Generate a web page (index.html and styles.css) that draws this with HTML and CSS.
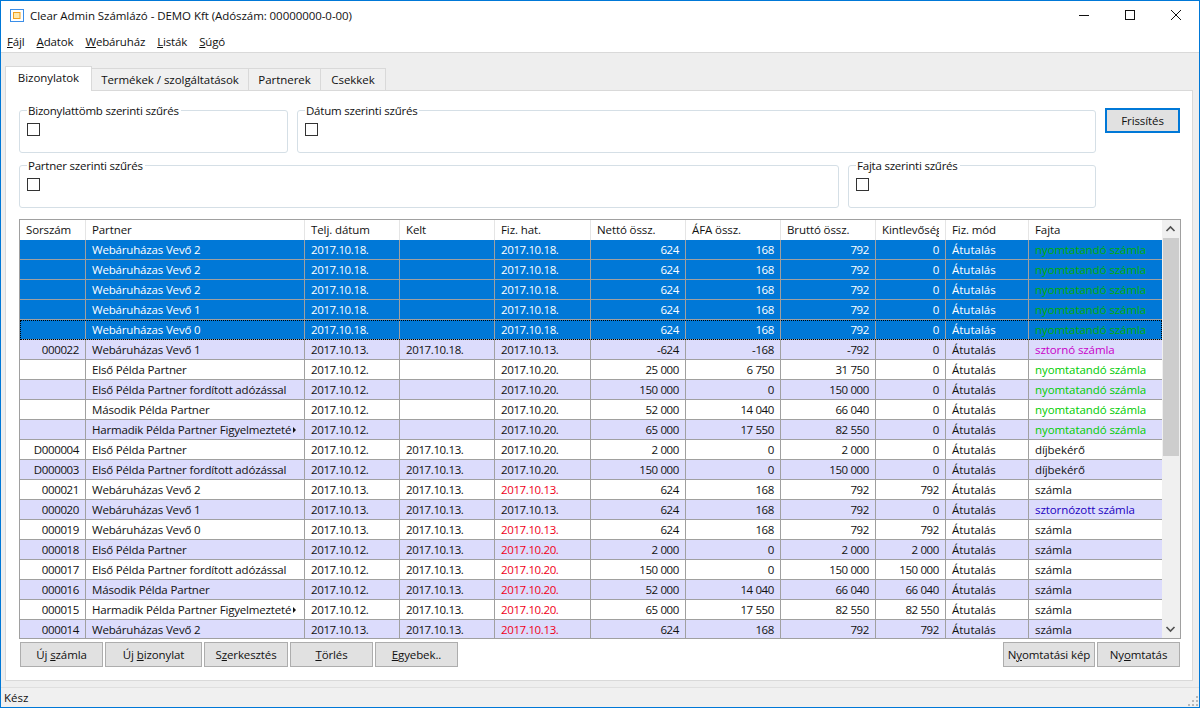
FILE: index.html
```html
<!DOCTYPE html>
<html lang="hu">
<head>
<meta charset="utf-8">
<title>Clear Admin Számlázó</title>
<link rel="stylesheet" href="styles.css">
</head>
<body>
<div class="window">
  <header class="titlebar">
    <svg class="appicon" width="14" height="14" viewBox="0 0 14 14"><rect x="0.5" y="0.5" width="13" height="12" fill="#fff" stroke="#3b8ee8"/><rect x="3.5" y="3.5" width="6.5" height="6" fill="#ffe9b0" stroke="#f0a020"/></svg>
    <span class="title">Clear Admin Számlázó - DEMO Kft (Adószám: 00000000-0-00)</span>
    <div class="winbtns">
      <svg width="46" height="28" viewBox="0 0 46 28"><path d="M18 14.5h10" stroke="#111" fill="none"/></svg>
      <svg width="46" height="28" viewBox="0 0 46 28"><rect x="18.5" y="9.5" width="9" height="9" stroke="#111" fill="none"/></svg>
      <svg width="46" height="28" viewBox="0 0 46 28"><path d="M18 9l10 10M28 9L18 19" stroke="#111" fill="none"/></svg>
    </div>
  </header>
  <nav class="menubar">
    <span><u>F</u>ájl</span><span><u>A</u>datok</span><span><u>W</u>ebáruház</span><span><u>L</u>isták</span><span><u>S</u>úgó</span>
  </nav>
  <main class="content">
    <div class="tabs">
      <div class="tab active">Bizonylatok</div>
      <div class="tab t2">Termékek / szolgáltatások</div>
      <div class="tab t3">Partnerek</div>
      <div class="tab t4">Csekkek</div>
    </div>
    <section class="pane">
      <div class="filter-row">
        <div class="group g1"><span class="legend">Bizonylattömb szerinti szűrés</span><span class="check"></span></div>
        <div class="group g2"><span class="legend">Dátum szerinti szűrés</span><span class="check"></span></div>
        <button class="btn refresh">Frissítés</button>
      </div>
      <div class="filter-row second">
        <div class="group g3"><span class="legend">Partner szerinti szűrés</span><span class="check"></span></div>
        <div class="group g4"><span class="legend">Fajta szerinti szűrés</span><span class="check"></span></div>
      </div>
      <div class="gridbox">
        <table class="grid">
          <colgroup><col class="c1"><col class="c2"><col class="c3"><col class="c3"><col class="c5"><col class="c3"><col class="c3"><col class="c3"><col class="c9"><col class="c10"><col class="c11"></colgroup>
          <thead><tr><th>Sorszám</th><th>Partner</th><th>Telj. dátum</th><th>Kelt</th><th>Fiz. hat.</th><th>Nettó össz.</th><th>ÁFA össz.</th><th>Bruttó össz.</th><th><div class="clip">Kintlevőség</div></th><th>Fiz. mód</th><th>Fajta</th></tr></thead>
          <tbody>
            <tr class="sel"><td class="r"></td><td>Webáruházas Vevő 2</td><td>2017.10.18.</td><td></td><td>2017.10.18.</td><td class="r">624</td><td class="r">168</td><td class="r">792</td><td class="r">0</td><td>Átutalás</td><td class="g">nyomtatandó számla</td></tr>
            <tr class="sel"><td class="r"></td><td>Webáruházas Vevő 2</td><td>2017.10.18.</td><td></td><td>2017.10.18.</td><td class="r">624</td><td class="r">168</td><td class="r">792</td><td class="r">0</td><td>Átutalás</td><td class="g">nyomtatandó számla</td></tr>
            <tr class="sel"><td class="r"></td><td>Webáruházas Vevő 2</td><td>2017.10.18.</td><td></td><td>2017.10.18.</td><td class="r">624</td><td class="r">168</td><td class="r">792</td><td class="r">0</td><td>Átutalás</td><td class="g">nyomtatandó számla</td></tr>
            <tr class="sel"><td class="r"></td><td>Webáruházas Vevő 1</td><td>2017.10.18.</td><td></td><td>2017.10.18.</td><td class="r">624</td><td class="r">168</td><td class="r">792</td><td class="r">0</td><td>Átutalás</td><td class="g">nyomtatandó számla</td></tr>
            <tr class="sel focus"><td class="r"></td><td>Webáruházas Vevő 0</td><td>2017.10.18.</td><td></td><td>2017.10.18.</td><td class="r">624</td><td class="r">168</td><td class="r">792</td><td class="r">0</td><td>Átutalás</td><td class="g">nyomtatandó számla</td></tr>
            <tr class="alt"><td class="r">000022</td><td>Webáruházas Vevő 1</td><td>2017.10.13.</td><td>2017.10.18.</td><td>2017.10.13.</td><td class="r">-624</td><td class="r">-168</td><td class="r">-792</td><td class="r">0</td><td>Átutalás</td><td class="m">sztornó számla</td></tr>
            <tr><td class="r"></td><td>Első Példa Partner</td><td>2017.10.12.</td><td></td><td>2017.10.20.</td><td class="r">25 000</td><td class="r">6 750</td><td class="r">31 750</td><td class="r">0</td><td>Átutalás</td><td class="g">nyomtatandó számla</td></tr>
            <tr class="alt"><td class="r"></td><td>Első Példa Partner fordított adózással</td><td>2017.10.12.</td><td></td><td>2017.10.20.</td><td class="r">150 000</td><td class="r">0</td><td class="r">150 000</td><td class="r">0</td><td>Átutalás</td><td class="g">nyomtatandó számla</td></tr>
            <tr><td class="r"></td><td>Második Példa Partner</td><td>2017.10.12.</td><td></td><td>2017.10.20.</td><td class="r">52 000</td><td class="r">14 040</td><td class="r">66 040</td><td class="r">0</td><td>Átutalás</td><td class="g">nyomtatandó számla</td></tr>
            <tr class="alt"><td class="r"></td><td><div class="trunc"><span>Harmadik Példa Partner Figyelmezteté</span><i class="more"></i></div></td><td>2017.10.12.</td><td></td><td>2017.10.20.</td><td class="r">65 000</td><td class="r">17 550</td><td class="r">82 550</td><td class="r">0</td><td>Átutalás</td><td class="g">nyomtatandó számla</td></tr>
            <tr><td class="r">D000004</td><td>Első Példa Partner</td><td>2017.10.12.</td><td>2017.10.13.</td><td>2017.10.20.</td><td class="r">2 000</td><td class="r">0</td><td class="r">2 000</td><td class="r">0</td><td>Átutalás</td><td>díjbekérő</td></tr>
            <tr class="alt"><td class="r">D000003</td><td>Első Példa Partner fordított adózással</td><td>2017.10.12.</td><td>2017.10.13.</td><td>2017.10.20.</td><td class="r">150 000</td><td class="r">0</td><td class="r">150 000</td><td class="r">0</td><td>Átutalás</td><td>díjbekérő</td></tr>
            <tr><td class="r">000021</td><td>Webáruházas Vevő 2</td><td>2017.10.13.</td><td>2017.10.13.</td><td class="red">2017.10.13.</td><td class="r">624</td><td class="r">168</td><td class="r">792</td><td class="r">792</td><td>Átutalás</td><td>számla</td></tr>
            <tr class="alt"><td class="r">000020</td><td>Webáruházas Vevő 1</td><td>2017.10.13.</td><td>2017.10.13.</td><td>2017.10.13.</td><td class="r">624</td><td class="r">168</td><td class="r">792</td><td class="r">0</td><td>Átutalás</td><td class="b">sztornózott számla</td></tr>
            <tr><td class="r">000019</td><td>Webáruházas Vevő 0</td><td>2017.10.13.</td><td>2017.10.13.</td><td class="red">2017.10.13.</td><td class="r">624</td><td class="r">168</td><td class="r">792</td><td class="r">792</td><td>Átutalás</td><td>számla</td></tr>
            <tr class="alt"><td class="r">000018</td><td>Első Példa Partner</td><td>2017.10.12.</td><td>2017.10.13.</td><td class="red">2017.10.20.</td><td class="r">2 000</td><td class="r">0</td><td class="r">2 000</td><td class="r">2 000</td><td>Átutalás</td><td>számla</td></tr>
            <tr><td class="r">000017</td><td>Első Példa Partner fordított adózással</td><td>2017.10.12.</td><td>2017.10.13.</td><td class="red">2017.10.20.</td><td class="r">150 000</td><td class="r">0</td><td class="r">150 000</td><td class="r">150 000</td><td>Átutalás</td><td>számla</td></tr>
            <tr class="alt"><td class="r">000016</td><td>Második Példa Partner</td><td>2017.10.12.</td><td>2017.10.13.</td><td class="red">2017.10.20.</td><td class="r">52 000</td><td class="r">14 040</td><td class="r">66 040</td><td class="r">66 040</td><td>Átutalás</td><td>számla</td></tr>
            <tr><td class="r">000015</td><td><div class="trunc"><span>Harmadik Példa Partner Figyelmezteté</span><i class="more"></i></div></td><td>2017.10.12.</td><td>2017.10.13.</td><td class="red">2017.10.20.</td><td class="r">65 000</td><td class="r">17 550</td><td class="r">82 550</td><td class="r">82 550</td><td>Átutalás</td><td>számla</td></tr>
            <tr class="alt"><td class="r">000014</td><td>Webáruházas Vevő 2</td><td>2017.10.13.</td><td>2017.10.13.</td><td class="red">2017.10.13.</td><td class="r">624</td><td class="r">168</td><td class="r">792</td><td class="r">792</td><td>Átutalás</td><td>számla</td></tr>
          </tbody>
        </table>
        <div class="scrollbar">
          <svg class="arrow" width="17" height="18" viewBox="0 0 17 18"><path d="M4.5 11l4-4 4 4" stroke="#505050" stroke-width="1.6" fill="none"/></svg>
          <div class="track"><div class="thumb"></div></div>
          <svg class="arrow" width="17" height="18" viewBox="0 0 17 18"><path d="M4.5 7l4 4 4-4" stroke="#505050" stroke-width="1.6" fill="none"/></svg>
        </div>
      </div>
      <div class="actions">
        <button class="btn w83">Új <u>s</u>zámla</button>
        <button class="btn w97">Új <u>b</u>izonylat</button>
        <button class="btn w84">S<u>z</u>erkesztés</button>
        <button class="btn w83"><u>T</u>örlés</button>
        <button class="btn w83"><u>E</u>gyebek..</button>
        <button class="btn w92 push">N<u>y</u>omtatási kép</button>
        <button class="btn w83">Ny<u>o</u>mtatás</button>
      </div>
    </section>
  </main>
  <footer class="statusbar">
    <span>Kész</span>
    <svg class="grip" width="12" height="12" viewBox="0 0 12 12"><path d="M9 1h2v2H9zM5 5h2v2H5zM9 5h2v2H9zM1 9h2v2H1zM5 9h2v2H5zM9 9h2v2H9z" fill="#b8b8b8"/></svg>
  </footer>
</div>
</body>
</html>
```
FILE: styles.css
```css
* { box-sizing: border-box; }
html, body { margin: 0; padding: 0; }
body {
  font-family: "Open Sans", "Noto Sans", "Liberation Sans", sans-serif;
  font-size: 11.5px;
  color: #111;
  overflow: hidden;
}
.window {
  width: 1200px;
  height: 708px;
  border: 1px solid #0078d7;
  display: flex;
  flex-direction: column;
  background: #fff;
}
.titlebar {
  height: 28px;
  display: flex;
  align-items: center;
  padding-left: 9px;
  flex: none;
}
.appicon { flex: none; margin-top: 2px; }
.title { margin-left: 6px; font-size: 11.5px; letter-spacing: -0.06px; }
.winbtns { margin-left: auto; display: flex; }
.winbtns svg { display: block; }
.menubar {
  height: 24px;
  flex: none;
  display: flex;
  gap: 12px;
  padding: 2px 0 0 6px;
  align-items: center;
  border-bottom: 1px solid #d9d9d9;
  letter-spacing: -0.15px;
}
.content {
  flex: 1;
  background: #eeeeee;
  padding: 13px 6px 6px 4px;
  display: flex;
  flex-direction: column;
  min-height: 0;
}
.tabs {
  display: flex;
  align-items: flex-end;
  height: 25px;
  flex: none;
  margin-bottom: -1px;
  position: relative;
}
.tab {
  height: 23px;
  border: 1px solid #d9d9d9;
  border-left: 0;
  border-bottom: 1px solid #d9d9d9;
  background: #f0f0f0;
  text-align: center;
  line-height: 21px;
  letter-spacing: -0.05px;
}
.tab.active {
  height: 25px;
  width: 87px;
  border-left: 1px solid #d9d9d9;
  border-bottom: 0;
  background: #fff;
  line-height: 22px;
  z-index: 1;
}
.t2 { width: 157px; }
.t3 { width: 72px; }
.t4 { width: 65px; }
.pane {
  flex: 1;
  background: #fff;
  border: 1px solid #d9d9d9;
  padding: 17px 11px 0 13px;
  min-height: 0;
}
.filter-row {
  display: flex;
  gap: 9px;
  align-items: flex-start;
}
.second { margin-top: 12px; }
.group {
  height: 43px;
  margin-top: 2px;
  border: 1px solid #d5dfe6;
  border-radius: 3px;
  padding: 0 0 0 7px;
  flex: none;
}
.g1 { width: 269px; }
.g2 { width: 799px; }
.g3 { width: 820px; }
.g4 { width: 248px; }
.second .group { margin-top: 0; }
.legend {
  display: table;
  background: #fff;
  padding: 0 2px 0 1px;
  margin-top: -8px;
  height: 16px;
  line-height: 16px;
  letter-spacing: -0.22px;
}
.check {
  display: block;
  width: 13px;
  height: 13px;
  margin-top: 4px;
  border: 1px solid #333;
}
.btn {
  font: inherit;
  color: #111;
  height: 25px;
  padding: 0;
  border: 1px solid #adadad;
  background: #e1e1e1;
  flex: none;
  letter-spacing: -0.1px;
}
.refresh {
  width: 75px;
  height: 25px;
  margin-left: 0;
  border: 2px solid #0078d7;
}
.gridbox {
  margin-top: 11px;
  height: 420px;
  width: 1162px;
  border: 1px solid #a0a0a0;
  display: flex;
  overflow: hidden;
  background: #fff;
}
.grid {
  border-collapse: separate;
  border-spacing: 0;
  table-layout: fixed;
  width: 1142px;
  flex: none;
  align-self: flex-start;
}
.c1 { width: 66px; }
.c2 { width: 219px; }
.c3 { width: 95px; }
.c5 { width: 96px; }
.c9 { width: 70px; }
.c10 { width: 83px; }
.c11 { width: 133px; }
.grid th, .grid td {
  height: 20px;
  padding: 0 6px;
  white-space: nowrap;
  overflow: hidden;
  font-weight: 400;
  text-align: left;
  line-height: 18px;
}
.grid th { border-right: 1px solid #e5e5e5; letter-spacing: -0.1px; }
.grid th:last-child { border-right: 0; }
.grid td {
  border-right: 1px solid #a0a0a0;
  border-bottom: 1px solid #a0a0a0;
}
.grid td:last-child { border-right: 0; }
.grid td:nth-child(2) { letter-spacing: -0.17px; }
.grid td:nth-child(3), .grid td:nth-child(4), .grid td:nth-child(5), .grid .r { letter-spacing: -0.38px; }
.grid td:nth-child(11) { letter-spacing: -0.08px; }
.grid .r { text-align: right; }
.grid .alt td { background: #dcdcfc; }
.grid .sel td { background: #0078d7; color: #fff; }
.grid .sel .g { color: #00b000; }
.grid .g { color: #00cc00; }
.grid .m { color: #c800c8; }
.grid .b { color: #2000c0; }
.grid .red { color: #f00020; }
.focus { outline: 1px dotted #000; outline-offset: -1px; }
.clip { display: block; overflow: hidden; white-space: nowrap; }
.trunc { display: flex; align-items: center; }
.more {
  flex: none;
  width: 0;
  height: 0;
  margin-left: 2px;
  border-left: 3px solid #111;
  border-top: 3px solid transparent;
  border-bottom: 3px solid transparent;
}
.scrollbar {
  flex: 1;
  display: flex;
  flex-direction: column;
  background: #f0f0f0;
}
.arrow { display: block; flex: none; margin-left: 0; }
.track { flex: 1; padding: 0 1px; }
.thumb { height: 218px; background: #cdcdcd; }
.actions {
  margin-top: 3px;
  padding: 0 1px;
  display: flex;
  gap: 2px;
}
.w83 { width: 83px; }
.w84 { width: 84px; }
.w92 { width: 92px; }
.w97 { width: 97px; }
.push { margin-left: auto; }
.statusbar {
  height: 20px;
  flex: none;
  background: #f0f0f0;
  border-top: 1px solid #dfdfdf;
  display: flex;
  align-items: center;
  justify-content: space-between;
  padding-left: 3px;
}
.grip { margin-top: 6px; }
```
